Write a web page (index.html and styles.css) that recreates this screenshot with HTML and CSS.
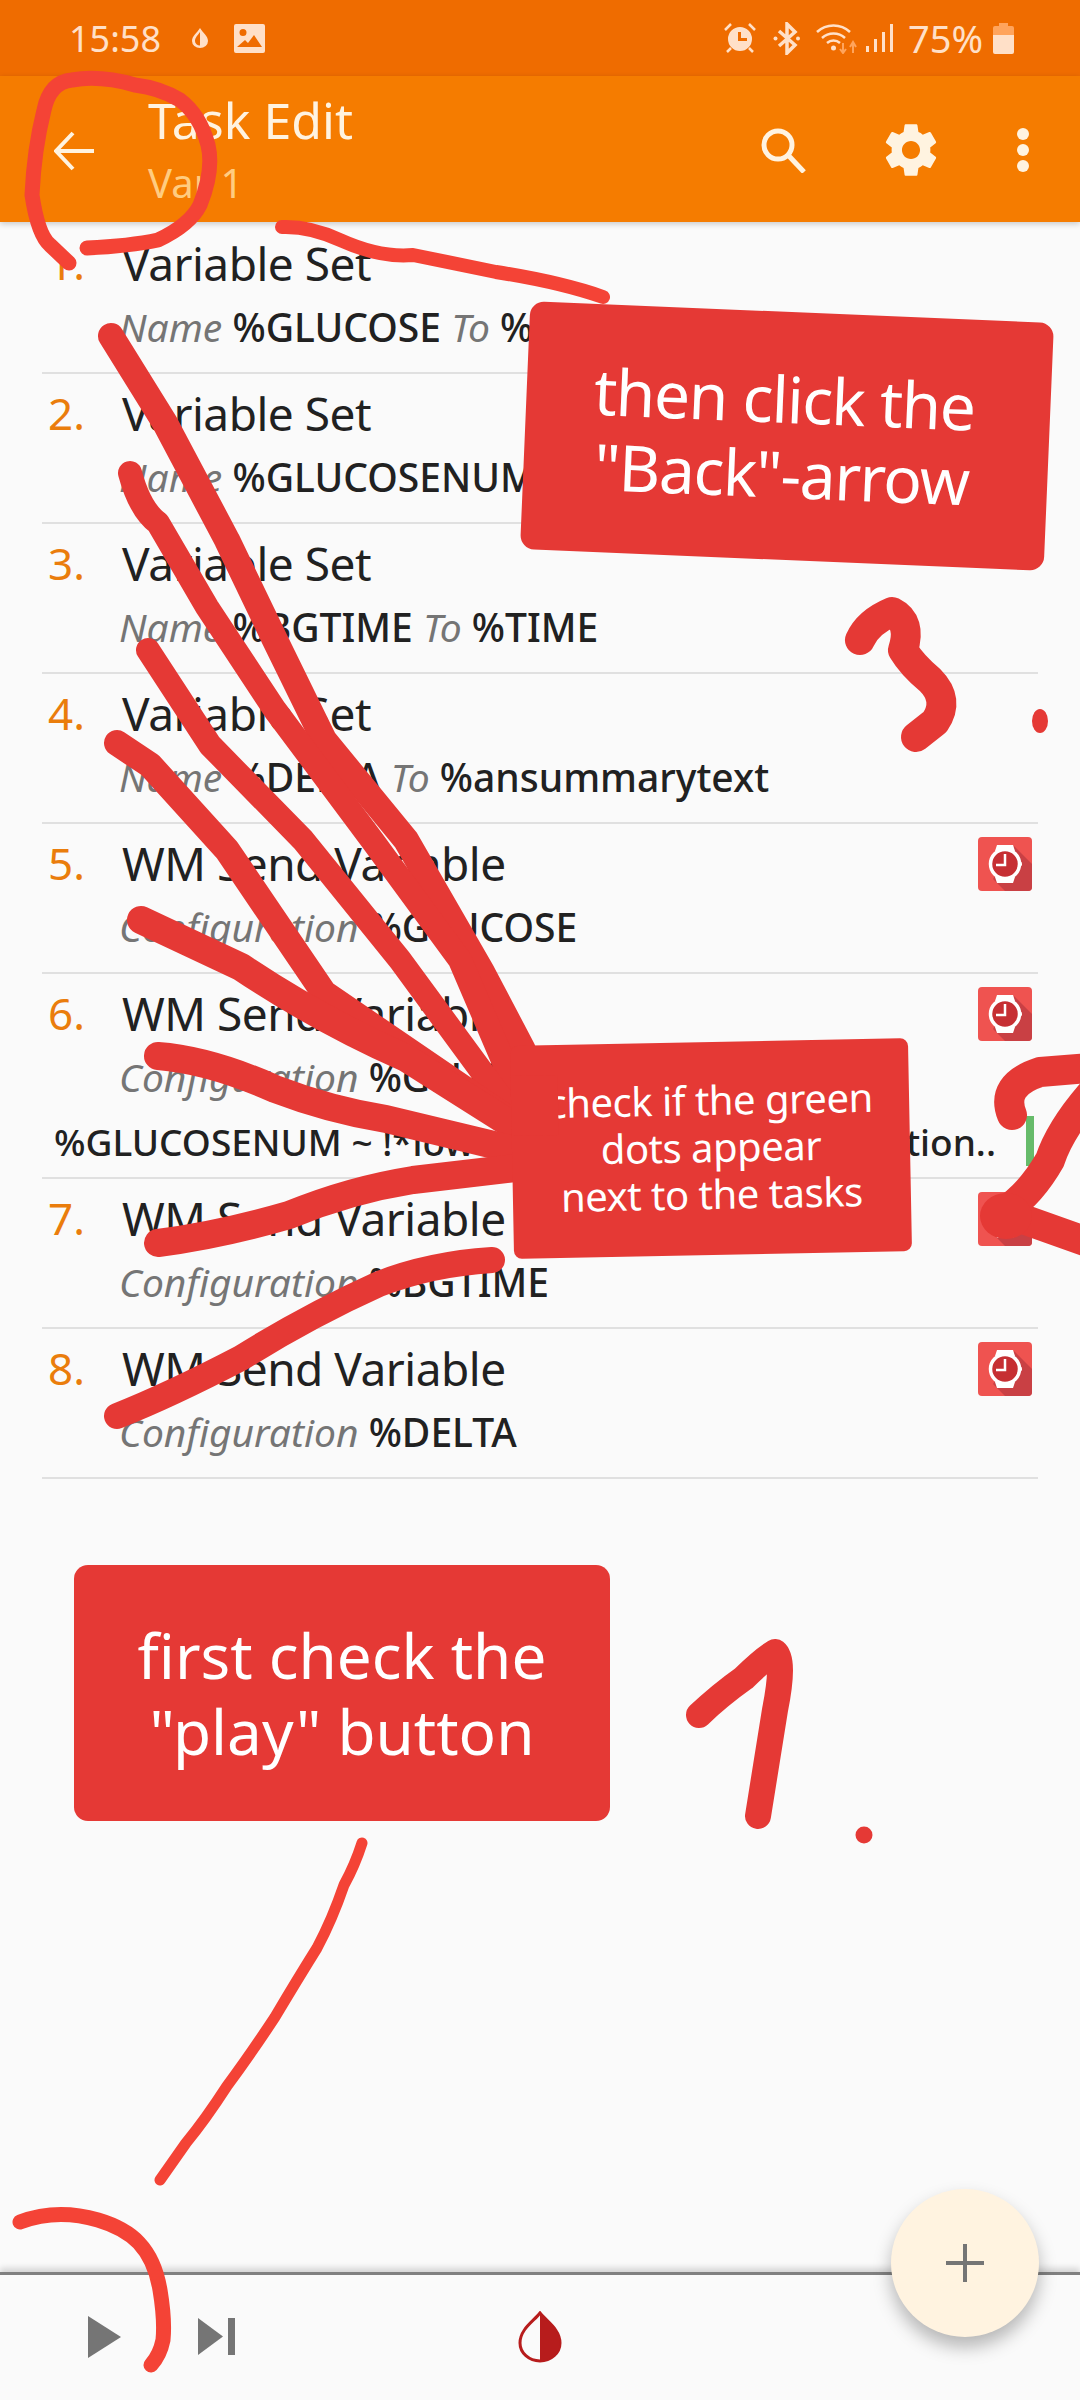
FILE: index.html
```html
<!DOCTYPE html>
<html>
<head>
<meta charset="utf-8">
<title>Task Edit</title>
<link rel="stylesheet" href="styles.css">
</head>
<body>

<svg class="defs" width="0" height="0">
  <symbol id="watch" viewBox="0 0 54 54">
    <rect width="54" height="54" rx="4" fill="#ef5350"/>
    <path d="M36 9 L54 27 V50 A4 4 0 0 1 50 54 H27 L15 42 Z" fill="#c94044"/>
    <path d="M19 8 H35 L37 14 H17 Z M17 40 H37 L35 46 H19 Z" fill="#fff"/>
    <rect x="39" y="24.500" width="5" height="5" rx="2" fill="#fff"/>
    <circle cx="27" cy="27" r="14.500" fill="#c62f33" stroke="#fff" stroke-width="3.500"/>
    <path d="M27 17 V28 H18" fill="none" stroke="#fff" stroke-width="2.500"/>
  </symbol>
</svg>

<div class="page">

  <div class="statusbar">
    <span class="clock">15:58</span>
    <svg class="st-drop" viewBox="0 0 18 20"><path d="M9 0 C12 5 17 8 17 13 A8 7 0 0 1 1 13 C1 8 6 5 9 0 Z M9 4 C7 7 4 9.500 4 13 A5 4.500 0 0 0 9 17.500 Z" fill="#ffe0c8" fill-rule="evenodd"/></svg>
    <svg class="st-image" viewBox="0 0 31 29"><path d="M2 0 H29 A2 2 0 0 1 31 2 V27 A2 2 0 0 1 29 29 H2 A2 2 0 0 1 0 27 V2 A2 2 0 0 1 2 0 Z M9 5 A3.500 3.500 0 1 0 9 12 A3.500 3.500 0 1 0 9 5 Z M3 23 H28 L20 11 L14 19 L11 16 Z" fill="#ffe0c8" fill-rule="evenodd"/></svg>
    <span class="st-gap"></span>
    <svg class="st-alarm" viewBox="0 0 32 30"><path d="M1 7 L7 1 M31 7 L25 1 M7 25 L3 29 M25 25 L29 29" stroke="#ffe0c8" stroke-width="2.500" fill="none"/><path d="M16 4 A12 12 0 1 0 16 28 A12 12 0 1 0 16 4 Z M14 9 H17 V15 H23 V18 H14 Z" fill="#ffe0c8" fill-rule="evenodd"/></svg>
    <svg class="st-bt" viewBox="0 0 28 33"><path d="M6 9 L22 23 L14 31 V2 L22 10 L6 24" fill="none" stroke="#ffe0c8" stroke-width="3.500"/><circle cx="2.500" cy="16.500" r="2" fill="#ffe0c8"/><circle cx="25" cy="16.500" r="2" fill="#ffe0c8"/></svg>
    <svg class="st-wifi" viewBox="0 0 42 31"><g fill="none" stroke="#ffe0c8" stroke-width="2.500"><path d="M1 9 A24 24 0 0 1 34 9"/><path d="M6 15 A17 17 0 0 1 29 15"/><path d="M11 20 A10 10 0 0 1 24 20"/></g><circle cx="17.500" cy="25" r="2.500" fill="#ffe0c8"/><path d="M27 20 V29 M24 26 L27 30 L30 26" stroke="#ffa45c" stroke-width="2" fill="none"/><path d="M37 30 V20 M34 24 L37 19 L40 24" stroke="#ffa45c" stroke-width="2" fill="none"/></svg>
    <svg class="st-signal" viewBox="0 0 27 28"><g fill="#ffe0c8"><rect x="0" y="22" width="3" height="6"/><rect x="8" y="15" width="3" height="13"/><rect x="16" y="8" width="3" height="20"/><rect x="24" y="0" width="3" height="28"/></g></svg>
    <span class="percent">75%</span>
    <svg class="st-batt" viewBox="0 0 21 31"><path d="M6 0 H15 V3 H19 A2 2 0 0 1 21 5 V12 H0 V5 A2 2 0 0 1 2 3 H6 Z" fill="#ffa45c"/><path d="M0 12 H21 V29 A2 2 0 0 1 19 31 H2 A2 2 0 0 1 0 29 Z" fill="#ffe0c8"/></svg>
  </div>

  <div class="appbar">
    <svg class="back" viewBox="0 0 40 40"><path d="M19 2 L2 20 L19 38 M2 20 H40" fill="none" stroke="#fff3e0" stroke-width="4"/></svg>
    <div class="titles">
      <div class="title">Task Edit</div>
      <div class="subtitle">Var 1</div>
    </div>
    <svg class="search" viewBox="0 0 45 45"><circle cx="17" cy="17" r="14" fill="none" stroke="#fff3e0" stroke-width="5"/><path d="M27 27 L43 44" stroke="#fff3e0" stroke-width="5"/></svg>
    <svg class="gear" viewBox="0 0 24 24"><path fill="#fff3e0" d="M19.430 12.980c.04-.32.07-.64.07-.98s-.03-.66-.07-.98l2.110-1.650c.19-.15.24-.42.12-.64l-2-3.460c-.12-.22-.39-.3-.61-.22l-2.490 1c-.52-.4-1.080-.73-1.690-.98l-.38-2.650C14.460 2.180 14.250 2 14 2h-4c-.25 0-.46.18-.49.420l-.38 2.650c-.61.25-1.170.59-1.690.98l-2.490-1c-.23-.09-.49 0-.61.220l-2 3.460c-.13.22-.07.49.12.64l2.110 1.650c-.04.32-.07.65-.07.98s.03.66.07.98l-2.110 1.650c-.19.15-.24.42-.12.64l2 3.460c.12.22.39.3.61.22l2.490-1c.52.4 1.080.73 1.690.98l.38 2.650c.03.24.24.42.49.42h4c.25 0 .46-.18.49-.42l.38-2.650c.61-.25 1.170-.59 1.690-.98l2.490 1c.23.09.49 0 .61-.22l2-3.460c.12-.22.07-.49-.12-.64l-2.110-1.650zM12 15.500c-1.930 0-3.500-1.570-3.500-3.500s1.570-3.500 3.500-3.500 3.500 1.570 3.500 3.500-1.570 3.500-3.500 3.500z"/></svg>
    <div class="dots"><i></i><i></i><i></i></div>
  </div>

  <div class="list">
    <div class="row">
      <span class="num">1.</span>
      <div class="body">
        <div class="name">Variable Set</div>
        <div class="args"><em>Name</em> %GLUCOSE <em>To</em> %</div>
      </div>
    </div>
    <div class="row">
      <span class="num">2.</span>
      <div class="body">
        <div class="name">Variable Set</div>
        <div class="args"><em>Name</em> %GLUCOSENUM</div>
      </div>
    </div>
    <div class="row">
      <span class="num">3.</span>
      <div class="body">
        <div class="name">Variable Set</div>
        <div class="args"><em>Name</em> %BGTIME <em>To</em> %TIME</div>
      </div>
    </div>
    <div class="row">
      <span class="num">4.</span>
      <div class="body">
        <div class="name">Variable Set</div>
        <div class="args"><em>Name</em> %DELTA <em>To</em> %ansummarytext</div>
      </div>
    </div>
    <div class="row">
      <span class="num">5.</span>
      <div class="body">
        <div class="name">WM Send Variable</div>
        <div class="args"><em>Configuration</em> %GLUCOSE</div>
      </div>
      <svg class="plugin"><use href="#watch"/></svg>
    </div>
    <div class="row row-tall">
      <span class="num">6.</span>
      <div class="body">
        <div class="name">WM Send Variable</div>
        <div class="args"><em>Configuration</em> %GLUCO</div>
      </div>
      <svg class="plugin"><use href="#watch"/></svg>
      <div class="cond">
        <span>%GLUCOSENUM ~ !*low*</span>
        <span class="cond-end">tion..</span>
        <i class="cond-bar"></i>
      </div>
    </div>
    <div class="row">
      <span class="num">7.</span>
      <div class="body">
        <div class="name">WM Send Variable</div>
        <div class="args"><em>Configuration</em> %BGTIME</div>
      </div>
      <svg class="plugin"><use href="#watch"/></svg>
    </div>
    <div class="row">
      <span class="num">8.</span>
      <div class="body">
        <div class="name">WM Send Variable</div>
        <div class="args"><em>Configuration</em> %DELTA</div>
      </div>
      <svg class="plugin"><use href="#watch"/></svg>
    </div>
  </div>

  <div class="bottombar">
    <svg class="play" viewBox="0 0 33 42"><path d="M0 0 L33 21 L0 42 Z" fill="#757575"/></svg>
    <svg class="skip" viewBox="0 0 37 37"><path d="M0 0 L25 18.500 L0 37 Z" fill="#757575"/><rect x="30" y="0" width="7" height="37" fill="#757575"/></svg>
    <svg class="tint" viewBox="0 0 44 52"><path d="M22 2 C28 10 42 18 42 32 A20 18 0 0 1 2 32 C2 18 16 10 22 2 Z" fill="#fafafa" stroke="#b71c1c" stroke-width="3"/><path d="M22 2 C28 10 42 18 42 32 A20 18 0 0 1 22 50 Z" fill="#b71c1c"/></svg>
  </div>

  <div class="fab"><svg viewBox="0 0 38 38"><path d="M19 0 V38 M0 19 H38" stroke="#757575" stroke-width="4"/></svg></div>

  <!-- hand drawn marks on top of the screenshot -->
  <svg class="marks" viewBox="0 0 1080 2400">
    <g class="pen-light">
      <path stroke-width="15" d="M87 248 Q130 246 158 240 Q190 225 200 205 Q214 170 208 145 Q200 115 180 100 Q160 88 135 85 Q100 75 72 80 Q50 82 44 110 Q34 150 32 195 Q38 235 50 245 L69 263"/>
      <path stroke-width="14" d="M282 227 Q310 226 340 240 Q380 258 413 255 L496 272 Q560 282 603 297"/>
      <path stroke-width="11" d="M362 1843 Q355 1865 344 1885 Q332 1920 317 1948 Q297 1980 275 2017 Q250 2055 227 2086 Q205 2120 186 2143 L160 2180"/>
      <path stroke-width="15" d="M20 2222 Q57 2208 98 2220 Q125 2228 139 2243 Q155 2260 160 2290 Q165 2320 163 2340 Q160 2355 151 2365"/>
    </g>
    <g class="pen">
      <path stroke-width="26" d="M111 336 L165 423 L227 540 L275 640 L324 740 L406 840 L482 972 L523 1050"/>
      <path stroke-width="24" d="M130 473 Q140 510 158 523 L207 607 L275 710 L372 840 L460 960 L520 1100"/>
      <path stroke-width="24" d="M148 650 L210 745 L303 840 L400 960 L510 1110"/>
      <path stroke-width="26" d="M117 743 L150 765 L227 850 L324 993 L510 1120"/>
      <path stroke-width="28" d="M141 920 L241 967 Q320 1020 406 1058 L523 1132"/>
      <path stroke-width="28" d="M158 1056 Q210 1060 275 1089 Q330 1110 386 1119 L515 1150"/>
      <path stroke-width="28" d="M158 1243 Q220 1235 289 1215 Q350 1190 413 1180 L515 1168"/>
      <path stroke-width="26" d="M117 1416 Q170 1395 241 1358 Q310 1315 379 1284 Q430 1264 492 1260"/>
      <path stroke-width="30" d="M860 640 Q868 622 892 612 Q912 622 903 650 Q912 665 930 680 Q950 700 935 722 L916 737"/>
      <ellipse cx="1040" cy="721" rx="8" ry="12" class="pen-dot"/>
      <path stroke-width="30" d="M1012 1115 Q1000 1085 1040 1072 L1090 1068"/>
      <path stroke-width="30" d="M1090 1095 Q1060 1130 1050 1160 Q1030 1195 1003 1212 Q1040 1225 1090 1243"/>
      <ellipse cx="1006" cy="1216" rx="26" ry="23" class="pen-dot"/>
      <path stroke-width="26" d="M699 1715 Q720 1695 744 1678 Q762 1660 775 1652 Q785 1660 775 1710 L758 1816"/>
      <circle cx="864" cy="1835" r="8.500" class="pen-dot"/>
    </g>
  </svg>

  <div class="note note-back"><p>then click the<br>"Back"-arrow</p></div>
  <div class="note note-dots"><p>check if the green<br>dots appear<br>next to the tasks</p></div>
  <div class="note note-play"><p>first check the<br>"play" button</p></div>

</div>

</body>
</html>
```
FILE: styles.css
```css
/* Page frame */
html, body
{
    margin: 0;
    padding: 0;
}

.defs
{
    display: block;
    height: 0;
}

.page
{
    position: relative;
    display: flex;
    flex-direction: column;
    width: 1080px;
    height: 2400px;
    overflow: hidden;
    background-color: #fafafa;
    font-family: "Noto Sans", "Open Sans", sans-serif;
    color: #212121;
}

/* Status bar */
.statusbar
{
    display: flex;
    align-items: center;
    height: 76px;
    padding: 0 66px 0 69px;
    box-sizing: border-box;
    background-color: #ef6c00;
    color: #ffe0c8;
}

.clock { width: 122px; font-size: 36px; }
.percent { margin-left: 15px; width: 85px; font-size: 38px; }
.st-gap { flex: 1; }
.st-drop { width: 18px; height: 20px; }
.st-image { width: 31px; height: 29px; margin-left: 25px; }
.st-alarm { width: 32px; height: 30px; }
.st-bt { width: 28px; height: 33px; margin-left: 17px; }
.st-wifi { width: 42px; height: 31px; margin-left: 15px; }
.st-signal { width: 27px; height: 28px; margin-left: 8px; }
.st-batt { width: 21px; height: 31px; }

/* Action bar */
.appbar
{
    display: flex;
    align-items: center;
    height: 146px;
    padding: 0 51px 0 54px;
    box-sizing: border-box;
    background-color: #f57c00;
    box-shadow: 0 2px 6px rgba(0, 0, 0, 0.2);
    position: relative;
}

.back { width: 40px; height: 40px; margin-top: 4px; }

.titles
{
    flex: 1;
    margin-left: 54px;
}

.title
{
    font-size: 50px;
    line-height: 60px;
    color: #fff3e0;
}

.subtitle
{
    font-size: 40px;
    line-height: 50px;
    margin-top: 8px;
    color: #ffcc80;
}

.search { width: 45px; height: 45px; margin-right: 74px; margin-top: 2px; }
.gear { width: 62px; height: 62px; margin-right: 75px; margin-top: 2px; }

.dots
{
    display: flex;
    flex-direction: column;
    gap: 4px;
    margin-top: 2px;
}

.dots i
{
    display: block;
    width: 12px;
    height: 12px;
    border-radius: 50%;
    background-color: #fff3e0;
}

/* Action list */
.list
{
    flex: 1;
    padding-top: 2px;
}

.row
{
    position: relative;
    display: flex;
    height: 150px;
    margin: 0 42px;
    box-sizing: border-box;
    border-bottom: 2px solid #e0e0e0;
}

.row-tall
{
    height: 205px;
}

.num
{
    width: 80px;
    padding: 8px 0 0 6px;
    box-sizing: border-box;
    font-size: 44px;
    line-height: 62px;
    color: #ea7d0c;
}

.body
{
    flex: 1;
    padding-top: 8px;
}

.name
{
    font-size: 46px;
    line-height: 62px;
    letter-spacing: -0.5px;
}

.args
{
    margin: 9px 0 0 -3px;
    font-size: 39px;
    line-height: 48px;
    font-weight: 500;
}

.args em
{
    font-weight: 400;
    color: #757575;
}

.plugin
{
    width: 54px;
    height: 54px;
    margin: 13px 6px 0 0;
}

.cond
{
    position: absolute;
    left: 12px;
    right: 4px;
    bottom: 11px;
    display: flex;
    align-items: center;
    height: 50px;
    font-size: 37px;
    font-weight: 500;
}

.cond-end { margin-left: auto; margin-right: 30px; }

.cond-bar
{
    display: block;
    width: 8px;
    height: 50px;
    background-color: #66bb6a;
}

/* Bottom bar */
.bottombar
{
    display: flex;
    align-items: flex-start;
    height: 128px;
    box-sizing: border-box;
    border-top: 3px solid #808080;
    box-shadow: 0 -4px 6px rgba(0, 0, 0, 0.15);
    position: relative;
}

.play { width: 33px; height: 42px; margin: 41px 0 0 88px; }
.skip { width: 37px; height: 37px; margin: 43px 0 0 77px; }
.tint { width: 44px; height: 52px; margin: 36px 0 0 283px; }

.fab
{
    position: absolute;
    left: 891px;
    top: 2189px;
    display: flex;
    align-items: center;
    justify-content: center;
    width: 148px;
    height: 148px;
    border-radius: 50%;
    background-color: #fff3e0;
    box-shadow: 0 10px 18px rgba(0, 0, 0, 0.28);
}

.fab svg { width: 38px; height: 38px; }

/* Annotations */
.marks
{
    position: absolute;
    left: 0;
    top: 0;
    width: 1080px;
    height: 2400px;
}

.pen-light path
{
    fill: none;
    stroke: #f44336;
    stroke-linecap: round;
    stroke-linejoin: round;
}

.pen path
{
    fill: none;
    stroke: #e53935;
    stroke-linecap: round;
    stroke-linejoin: round;
}

.pen .pen-dot { fill: #e53935; }

.note
{
    position: absolute;
    display: flex;
    align-items: center;
    justify-content: center;
    box-sizing: border-box;
    border-radius: 14px;
    background-color: #e53935;
    color: #fff;
    text-align: center;
}

.note p { margin: 0; }

.note-back
{
    left: 525px;
    top: 312px;
    width: 524px;
    height: 248px;
    padding-right: 8px;
    transform: rotate(2.4deg);
    font-size: 64px;
    line-height: 75px;
    letter-spacing: -1.3px;
}

.note-dots
{
    left: 512px;
    top: 1042px;
    width: 398px;
    height: 213px;
    padding-bottom: 4px;
    border-radius: 8px;
    transform: rotate(-1.1deg);
    font-size: 40px;
    line-height: 47px;
    letter-spacing: -0.5px;
}

/* the strokes run over the first letter here */
.note-dots::after
{
    content: "";
    position: absolute;
    left: 0;
    top: 30px;
    width: 47px;
    height: 60px;
    background-color: #e53935;
}

.note-play
{
    left: 74px;
    top: 1565px;
    width: 536px;
    height: 256px;
    font-size: 62px;
    line-height: 76px;
}
```
